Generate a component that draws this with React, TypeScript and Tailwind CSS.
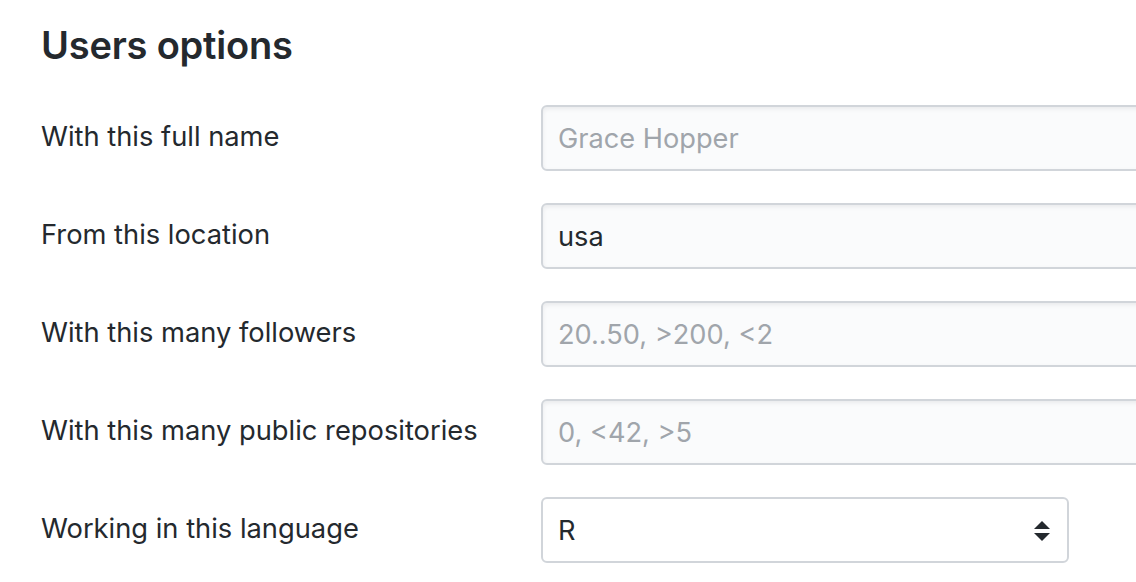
import React from "react";

const rows: { label: string; value?: string; placeholder?: string }[] = [
  { label: "With this full name", placeholder: "Grace Hopper" },
  { label: "From this location", value: "usa" },
  { label: "With this many followers", placeholder: "20..50, >200, <2" },
  { label: "With this many public repositories", placeholder: "0, <42, >5" },
];

export default function App() {
  return (
    <div
      className="w-[1136px] h-[582px] overflow-hidden bg-white text-[#24292e] pl-[41px]"
      style={{ fontFamily: "Inter, 'Noto Sans', sans-serif" }}
    >
      <h2 className="text-[38px] font-semibold leading-[50px] pt-[20px] tracking-[-0.2px]">Users options</h2>
      <div className="mt-[35px] flex flex-col gap-[32px]">
        {rows.map((r) => (
          <div key={r.label} className="flex items-start">
            <div className="w-[500px] shrink-0 pt-[14px] text-[27.3px] leading-[36px]">{r.label}</div>
            <div className="w-[640px] shrink-0 h-[66px] rounded-[6px] border-2 border-[#d1d5da] bg-[#fafbfc] shadow-[inset_0_2px_4px_rgba(27,31,35,0.075)] flex items-center px-[15px] pt-[2px] text-[27.2px]">
              {r.value ? (
                <span className="text-[#24292e]">{r.value}</span>
              ) : (
                <span className="text-[#a0a5ab]">{r.placeholder}</span>
              )}
            </div>
          </div>
        ))}
        <div className="flex items-start">
          <div className="w-[500px] shrink-0 pt-[14px] text-[27.3px] leading-[36px]">Working in this language</div>
          <div className="w-[528px] shrink-0 h-[66px] rounded-[6px] border-2 border-[#d1d5da] bg-white flex items-center justify-between pl-[15px] pr-[16px] pt-[2px] text-[27.2px]">
            <span>R</span>
            <svg width="18" height="22" viewBox="0 0 18 22">
              <path d="M9 1 L17 9 L1 9 Z" fill="#24292e" />
              <path d="M1 13 L17 13 L9 21 Z" fill="#24292e" />
            </svg>
          </div>
        </div>
      </div>
    </div>
  );
}
